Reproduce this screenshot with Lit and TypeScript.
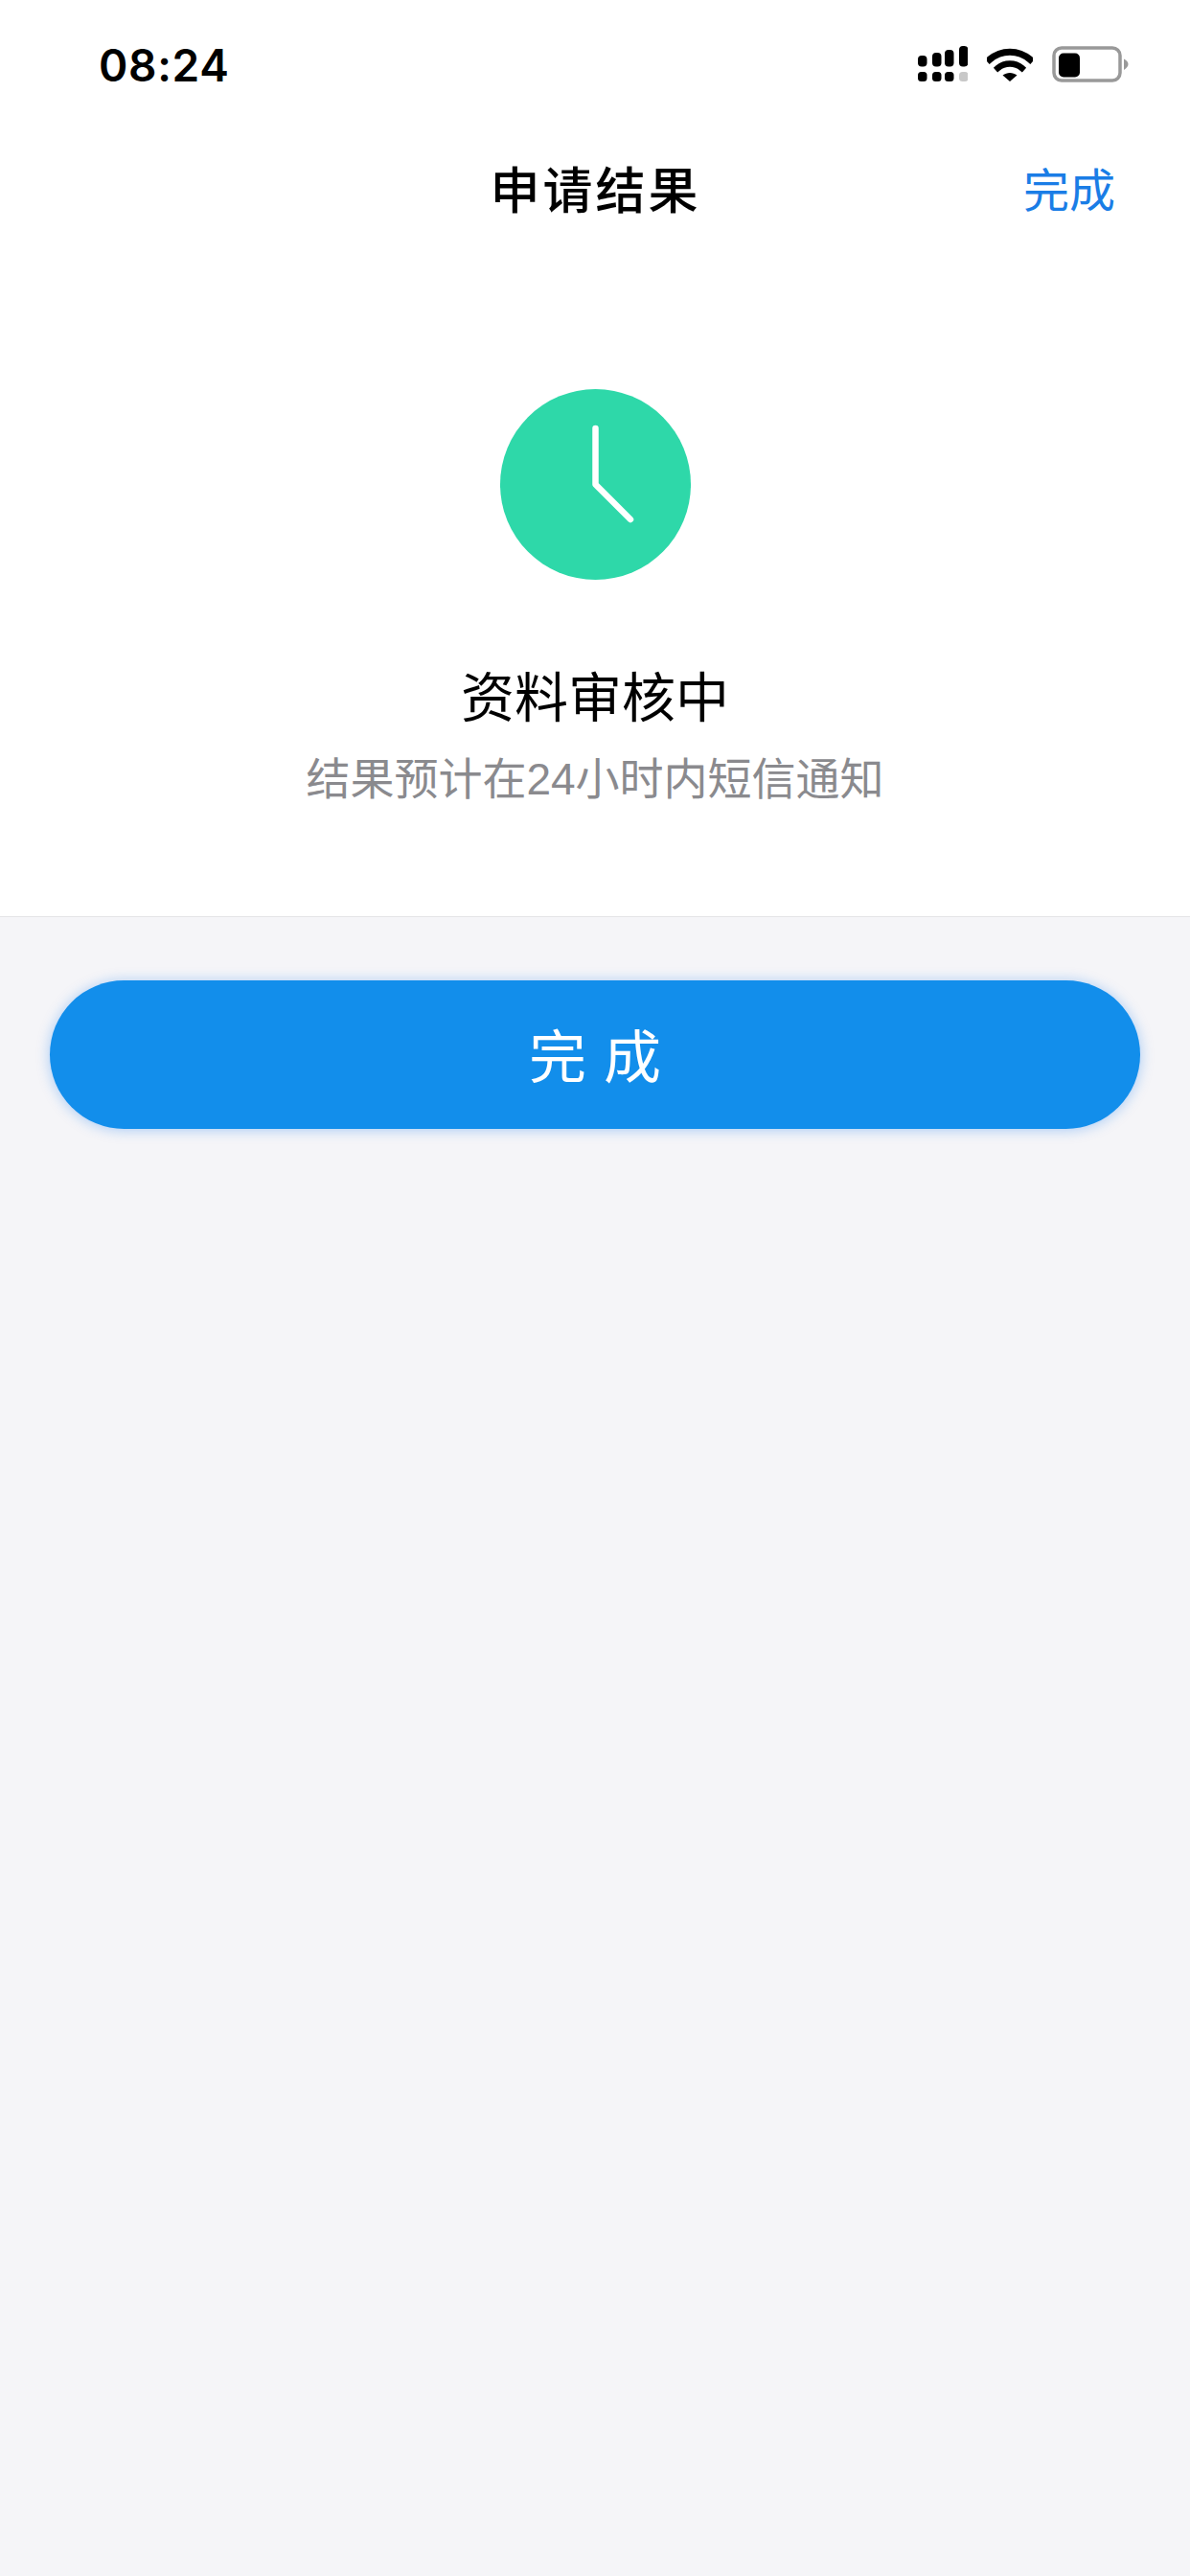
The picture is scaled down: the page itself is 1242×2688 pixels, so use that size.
import { LitElement, html, css, svg, unsafeCSS } from 'lit';
import { customElement, property } from 'lit/decorators.js';

const FONT = unsafeCSS(`"Liberation Sans", "Noto Sans CJK SC", sans-serif`);

@customElement('status-bar')
export class StatusBar extends LitElement {
  static styles = css`
    :host {
      display: flex;
      align-items: center;
      height: 132px;
      padding: 0 64px 0 103px;
      box-sizing: border-box;
    }
    .time {
      flex: 1;
      padding-top: 3px;
      font-family: Inter, "Liberation Sans", sans-serif;
      font-size: 46px;
      font-weight: 600;
      line-height: 48px;
      letter-spacing: 0.7px;
      color: #000;
    }
    .icons {
      display: flex;
      align-items: center;
      gap: 20px;
      margin-top: 2px;
    }
    svg {
      display: block;
    }
  `;

  // 4 signal columns, the last dot is unlit
  private signal() {
    const cols = [
      { x: 0, top: 10 },
      { x: 15, top: 7 },
      { x: 28, top: 4 },
      { x: 43, top: 0 },
    ];
    return html`<svg width="52" height="38" viewBox="0 0 52 38">
      ${cols.map(
        (c, i) => svg`
          <rect x=${c.x} y=${c.top} width="9.5" height=${21.5 - c.top} rx="4" fill="#000"></rect>
          <rect x=${c.x} y="27" width="9.5" height="10" rx="3.5" fill=${i === 3 ? '#c8c8c8' : '#000'}></rect>
        `
      )}
    </svg>`;
  }

  render() {
    return html`
      <span class="time">08:24</span>
      <div class="icons">
        ${this.signal()}
        <svg width="48" height="38" viewBox="0 0 48 38">
          <path d="M3 14 C15 3.5 33 3.5 45 14" fill="none" stroke="#000" stroke-width="7" stroke-linecap="square"></path>
          <path d="M11.5 23 C18.5 17 29.5 17 36.5 23" fill="none" stroke="#000" stroke-width="6.5" stroke-linecap="square"></path>
          <path d="M24 37 L16.5 30.5 C21 27 27 27 31.5 30.5 Z" fill="#000"></path>
        </svg>
        <svg width="80" height="38" viewBox="0 0 80 38">
          <rect x="2" y="2" width="69" height="34" rx="8" fill="none" stroke="#999" stroke-width="3.5"></rect>
          <rect x="7" y="7.5" width="22" height="25" rx="5" fill="#000"></rect>
          <path d="M75 13.5 C78 15 79.5 17 79.5 19 C79.5 21 78 23 75 25 Z" fill="#999"></path>
        </svg>
      </div>
    `;
  }
}

@customElement('clock-badge')
export class ClockBadge extends LitElement {
  @property({ type: Number }) size = 199;

  static styles = css`
    :host {
      display: block;
    }
    svg {
      display: block;
    }
  `;

  render() {
    return html`<svg width=${this.size} height=${this.size} viewBox="0 0 199 199">
      <circle cx="99.5" cy="99.5" r="99.5" fill="#2ed8a9"></circle>
      <path d="M99.5 41 V99.5 L136 136" fill="none" stroke="#fff" stroke-width="6.5" stroke-linecap="round" stroke-linejoin="round"></path>
    </svg>`;
  }
}

@customElement('app-root')
export class AppRoot extends LitElement {
  static styles = css`
    :host {
      display: block;
      height: 2688px;
      overflow: hidden;
      background: #f5f5f8;
      font-family: ${FONT};
    }

    .top {
      background: #fff;
      height: 957px;
      box-sizing: border-box;
      border-bottom: 1px solid #e4e4e6;
    }

    .nav {
      display: grid;
      grid-template-columns: 1fr auto 1fr;
      align-items: center;
      height: 132px;
      padding: 3px 78px 0 79px;
      box-sizing: border-box;
    }
    .nav-title {
      grid-column: 2;
      font-size: 52px;
      font-weight: 500;
      letter-spacing: 3px;
      line-height: 60px;
      color: #000;
    }
    .nav-done {
      justify-self: end;
      font-size: 48px;
      line-height: 60px;
      color: #1a7de6;
    }

    .result {
      display: flex;
      flex-direction: column;
      align-items: center;
      padding-top: 142px;
    }
    .result-title {
      margin-top: 88px;
      font-size: 56px;
      line-height: 72px;
      color: #000;
    }
    .result-desc {
      margin-top: 16px;
      font-size: 46px;
      line-height: 64px;
      color: #8a8a8e;
    }

    .actions {
      padding: 66px 52px 0;
    }
    .btn {
      display: flex;
      align-items: center;
      justify-content: center;
      height: 155px;
      padding-bottom: 4px;
      box-sizing: border-box;
      border-radius: 78px;
      background: #128eeb;
      box-shadow: 0 1px 14px rgba(18, 120, 240, 0.35);
      color: #fff;
      font-size: 60px;
      letter-spacing: 18px;
      text-indent: 18px;
    }
  `;

  render() {
    return html`
      <div class="top">
        <status-bar></status-bar>
        <div class="nav">
          <span class="nav-title">申请结果</span>
          <span class="nav-done">完成</span>
        </div>
        <div class="result">
          <clock-badge></clock-badge>
          <div class="result-title">资料审核中</div>
          <div class="result-desc">结果预计在24小时内短信通知</div>
        </div>
      </div>
      <div class="actions">
        <div class="btn">完成</div>
      </div>
    `;
  }
}
